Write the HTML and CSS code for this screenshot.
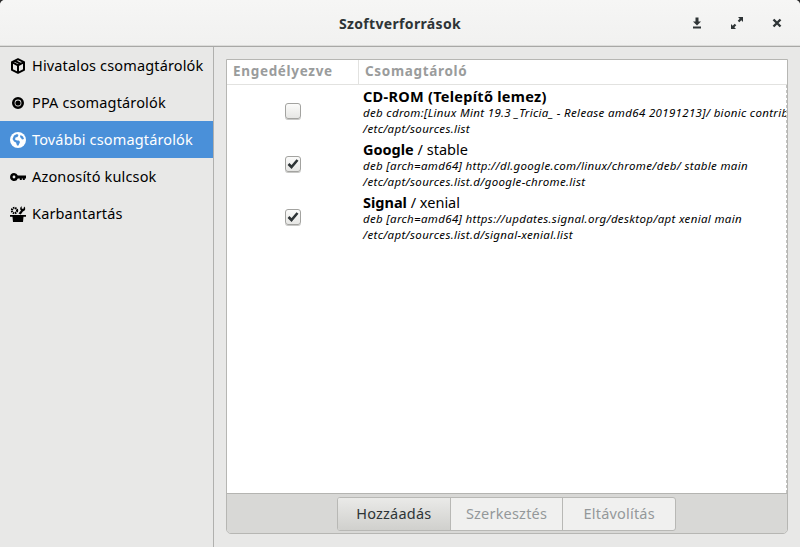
FILE: index.html
```html
<!DOCTYPE html>
<html lang="hu">
<head>
<meta charset="utf-8">
<title>Szoftverforrások</title>
<link rel="stylesheet" href="styles.css">
</head>
<body>
<div class="window">
  <header class="titlebar">
    <div class="title">Szoftverforrások</div>
    <div class="controls">
      <svg class="ctl" width="12" height="12" viewBox="0 0 12 12"><path d="M5.500 0.500h3v4h2.500L7 8.500 3 4.500h2.500zM3 9.500h8v2H3z" fill="#2e3436"/></svg>
      <svg class="ctl" width="14" height="14" viewBox="0 0 14 14"><path d="M8 1h5v5l-1.700-1.700-2 2-1.600-1.600 2-2zM1 8l1.700 1.700 2-2 1.600 1.600-2 2L6 13H1z" fill="#2e3436"/></svg>
      <svg class="ctl" width="10" height="10" viewBox="0 0 10 10"><path d="M1.500 1.500l7 7M8.500 1.500l-7 7" stroke="#2e3436" stroke-width="2.400" fill="none"/></svg>
    </div>
  </header>
  <div class="body">
    <nav class="sidebar">
      <div class="navrow">
        <svg class="navicon" width="16" height="16" viewBox="0 0 16 16"><path d="M8 1.200l6 2.900v7.800L8 14.800l-6-2.900V4.100zM8 7.300v6.500M2.500 4.400L8 7.300l5.500-2.900M5 2.900l5.700 3" fill="none" stroke="#000" stroke-width="2" stroke-linejoin="round"/></svg>
        <span class="navlabel">Hivatalos csomagtárolók</span>
      </div>
      <div class="navrow">
        <svg class="navicon" width="16" height="16" viewBox="0 0 16 16"><circle cx="8" cy="8" r="4.700" fill="none" stroke="#000" stroke-width="2.600"/><circle cx="8" cy="8" r="2.600" fill="#000"/></svg>
        <span class="navlabel">PPA csomagtárolók</span>
      </div>
      <div class="navrow selected">
        <svg class="navicon" width="16" height="16" viewBox="0 0 16 16"><circle cx="8" cy="8" r="8" fill="#fff"/><path d="M4 3.500l3-1.500 1.500 1-1 2-2 .5-.5 2 2 1 2 0 1 1.500-1.500 3.500-1.500 0-1-3-2-1-1.500-2.500zM10.500 3l2.500 1.500 1 2.500-2 .5-1-1.500-1-1z" fill="#4a90d9"/></svg>
        <span class="navlabel">További csomagtárolók</span>
      </div>
      <div class="navrow">
        <svg class="navicon" width="16" height="16" viewBox="0 0 16 16"><path d="M4 4a4 4 0 0 1 3.800 2.500H16V9.500h-1.200V11h-2V9.500h-1V11h-2V9.500H7.800A4 4 0 1 1 4 4zM4 6.600a1.400 1.400 0 1 0 0 2.800 1.400 1.400 0 0 0 0-2.800z" fill="#000"/></svg>
        <span class="navlabel">Azonosító kulcsok</span>
      </div>
      <div class="navrow">
        <svg class="navicon" width="16" height="16" viewBox="0 0 16 16"><path d="M0 9h16v1.800h-2.500L13 16H3l-.5-5.200H0z" fill="#000"/><circle cx="4.500" cy="4.500" r="2.600" fill="none" stroke="#000" stroke-width="2.200" stroke-dasharray="1.400 .7"/><path d="M8.500 7.500l2.500-3a2.600 2.600 0 0 1 .7-4.300v2.300l1.600.6.900-2.500a2.700 2.700 0 0 1-1.300 4.800L10.800 8.500z" fill="#000"/></svg>
        <span class="navlabel">Karbantartás</span>
      </div>
    </nav>
    <main class="content">
      <div class="frame">
        <div class="listarea">
          <div class="tablehead">
            <div class="col-enabled">Engedélyezve</div>
            <div class="col-repo">Csomagtároló</div>
          </div>
          <div class="rows">
            <div class="repo">
              <div class="checkcell"><span class="check"></span></div>
              <div class="repotext">
                <div class="reponame wide"><b>CD-ROM (Telepítő lemez)</b></div>
                <div class="repoline">deb cdrom:[Linux Mint 19.3 _Tricia_ - Release amd64 20191213]/ bionic contrib main</div>
                <div class="repoline">/etc/apt/sources.list</div>
              </div>
            </div>
            <div class="repo">
              <div class="checkcell"><span class="check"><svg width="12" height="10" viewBox="0 0 12 10"><path d="M1.500 5l3 3 6-7" fill="none" stroke="#2e3436" stroke-width="2.600"/></svg></span></div>
              <div class="repotext">
                <div class="reponame"><b>Google</b> / stable</div>
                <div class="repoline">deb [arch=amd64] http://dl.google.com/linux/chrome/deb/ stable main</div>
                <div class="repoline">/etc/apt/sources.list.d/google-chrome.list</div>
              </div>
            </div>
            <div class="repo">
              <div class="checkcell"><span class="check"><svg width="12" height="10" viewBox="0 0 12 10"><path d="M1.500 5l3 3 6-7" fill="none" stroke="#2e3436" stroke-width="2.600"/></svg></span></div>
              <div class="repotext">
                <div class="reponame"><b>Signal</b> / xenial</div>
                <div class="repoline">deb [arch=amd64] https://updates.signal.org/desktop/apt xenial main</div>
                <div class="repoline">/etc/apt/sources.list.d/signal-xenial.list</div>
              </div>
            </div>
          </div>
        </div>
        <div class="toolbar">
          <div class="btngroup">
            <div class="btn active">Hozzáadás</div>
            <div class="btn">Szerkesztés</div>
            <div class="btn">Eltávolítás</div>
          </div>
        </div>
      </div>
    </main>
  </div>
</div>
</body>
</html>
```
FILE: styles.css
```css
* { box-sizing: border-box; }
html, body { margin: 0; padding: 0; height: 100%; overflow: hidden; }
body { background: #2b2b2b; font-family: "Noto Sans", "Open Sans", sans-serif; color: #000; }
.window { width: 800px; height: 547px; display: flex; flex-direction: column; background: #e8e8e7; border-radius: 5px 5px 0 0; overflow: hidden; }
.titlebar { height: 47px; flex: none; display: flex; align-items: center; justify-content: center; background: linear-gradient(#f6f6f5, #f1f1f0); border-bottom: 1px solid #a8a8a6; box-shadow: inset 0 -1px 0 #dcdcda; position: relative; }
.title { font-size: 14px; font-weight: 700; color: #2e3436; letter-spacing: .33px; }
.controls { position: absolute; right: 18px; top: 16px; display: flex; align-items: center; gap: 28px; }
.ctl { display: block; }
.body { flex: 1; display: flex; min-height: 0; }
.sidebar { width: 214px; flex: none; border-right: 1px solid #b0b0ae; }
.navrow { height: 37px; display: flex; align-items: center; gap: 6px; padding-left: 10px; font-size: 14.500px; letter-spacing: .15px; }
.navrow.selected { background: #4a90d9; color: #fff; }
.navlabel { padding-bottom: 2px; }
.navicon { flex: none; }
.content { flex: 1; padding: 12px 12px 13px 12px; min-width: 0; }
.frame { height: 475px; display: flex; flex-direction: column; border: 1px solid #b6b6b3; border-radius: 0 0 5px 5px; overflow: hidden; }
.listarea { flex: 1; background: #fff; min-height: 0; overflow: hidden; }
.tablehead { height: 25px; display: flex; border-bottom: 1px solid #e2e2e0; font-size: 13.500px; font-weight: 700; color: #9a9c9c; letter-spacing: .68px; }
.col-enabled { width: 132px; flex: none; padding: 2px 0 0 6px; border-right: 1px solid #e2e2e0; }
.col-repo { flex: 1; padding: 2px 0 0 6px; }
.rows { border-right: 1px dashed #c4c4c2; overflow: hidden; height: 408px; }
.repo { display: flex; height: 53px; align-items: center; }
.checkcell { width: 132px; flex: none; display: flex; justify-content: center; }
.check { width: 16px; height: 16px; margin-bottom: 2px; display: flex; align-items: center; justify-content: center; border: 1px solid #a3a3a0; border-radius: 3px; background: linear-gradient(#fbfbfa, #e6e6e4); box-shadow: 0 1px 0 #c8c8c6; }
.repotext { padding-left: 4px; white-space: nowrap; min-width: 0; }
.reponame { font-size: 14.500px; line-height: 18px; }
.reponame.wide { letter-spacing: .28px; }
.repoline { font-size: 11.500px; letter-spacing: .33px; font-style: italic; line-height: 15.500px; }
.toolbar { height: 40px; flex: none; display: flex; align-items: center; justify-content: center; background: #d8d8d6; border-top: 1px solid #b4b4b1; }
.btngroup { display: flex; width: 339px; height: 34px; margin-right: 1px; border: 1px solid #b8b8b5; border-radius: 3px; overflow: hidden; background: #f0f0ef; font-size: 14.500px; letter-spacing: .2px; color: #94989a; }
.btn { display: flex; align-items: center; justify-content: center; flex: 1; border-left: 1px solid #b8b8b5; padding-bottom: 1px; }
.btn:first-child { border-left: 0; }
.btn.active { background: linear-gradient(#eaeae8, #d0d0cd); color: #2e3436; }
```
